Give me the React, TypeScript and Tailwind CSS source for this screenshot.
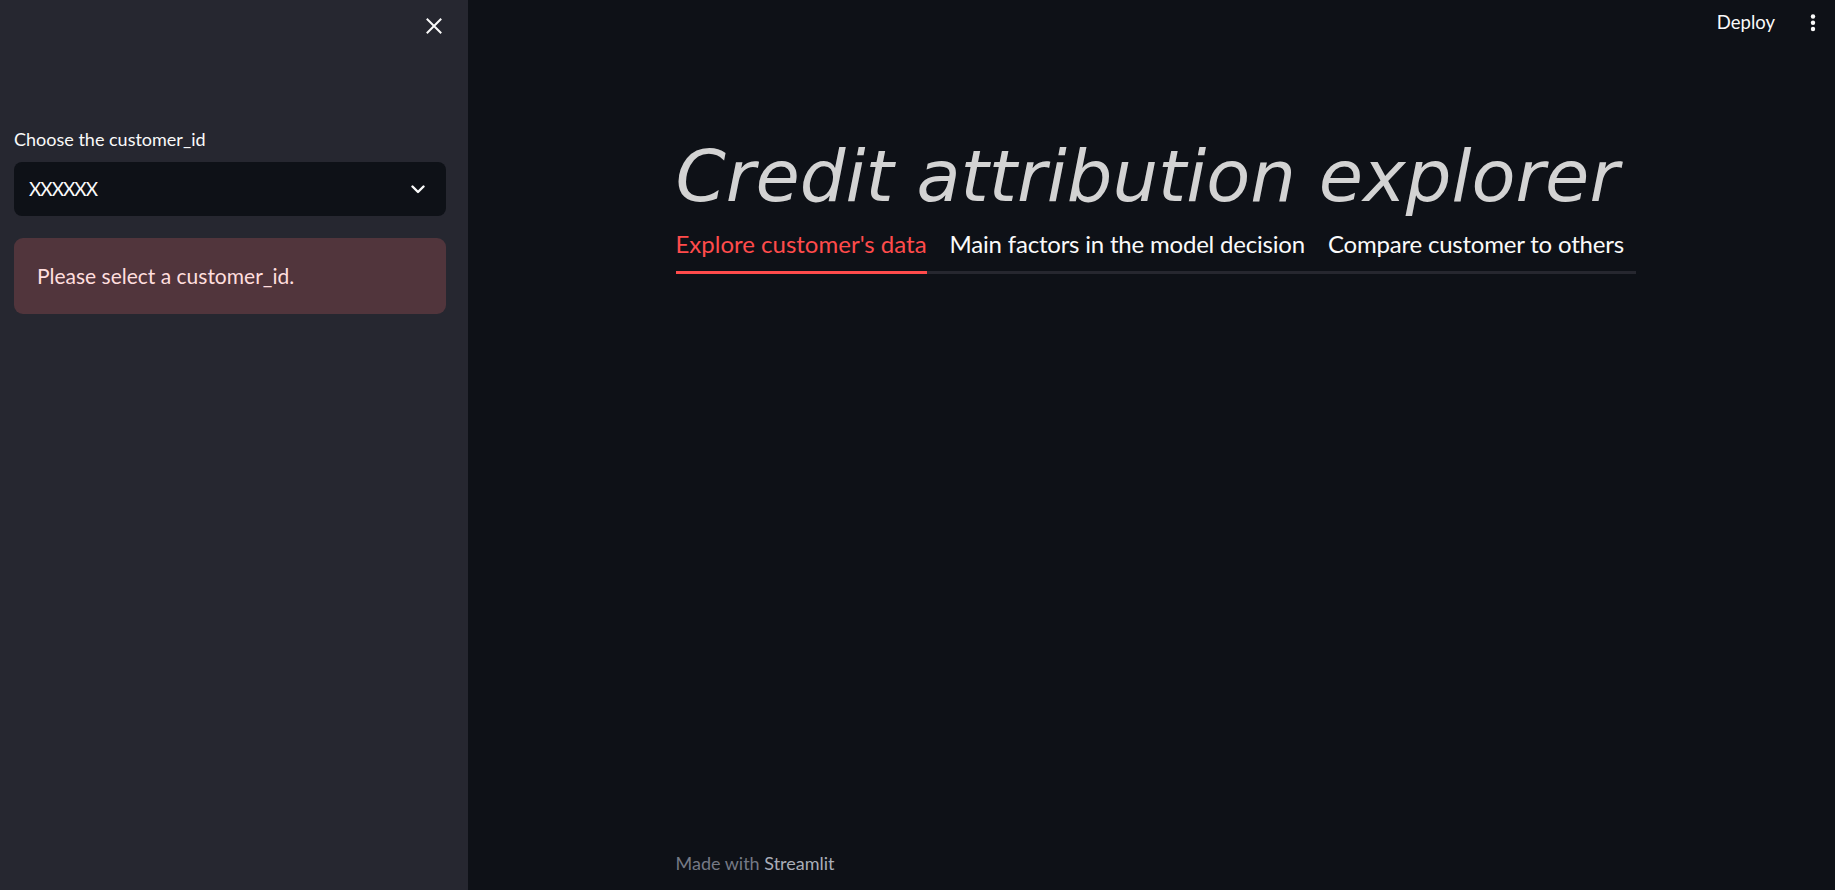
import React from "react";

const sans = "font-['Lato','Noto_Sans',sans-serif]";

function CloseIcon() {
  return (
    <svg width="16" height="16" viewBox="0 0 16 16" fill="none">
      <path d="M1.5 1.5 L14.5 14.5 M14.5 1.5 L1.5 14.5" stroke="#fafafa" strokeWidth="2" strokeLinecap="square" />
    </svg>
  );
}

function Chevron() {
  return (
    <svg width="14" height="9" viewBox="0 0 14 9" fill="none">
      <path d="M1.5 1.5 L7 7 L12.5 1.5" stroke="#fafafa" strokeWidth="2.4" strokeLinecap="round" strokeLinejoin="round" />
    </svg>
  );
}

function Dots() {
  return (
    <svg width="6" height="20" viewBox="0 0 6 20" fill="#fafafa">
      <circle cx="3" cy="3.5" r="2.2" />
      <circle cx="3" cy="9.75" r="2.2" />
      <circle cx="3" cy="16" r="2.2" />
    </svg>
  );
}

const tabs = ["Explore customer's data", "Main factors in the model decision", "Compare customer to others"];

export default function App() {
  return (
    <div className={`flex h-[890px] w-full overflow-hidden bg-[#0e1117] ${sans}`}>
      <aside className="flex w-[468px] shrink-0 flex-col bg-[#262730]">
        <div className="flex h-[52px] items-center justify-end pr-[26px]">
          <CloseIcon />
        </div>
        <div className="px-[14px] pr-[22px]">
          <div className="mt-[75px] text-[18px] leading-[24px] text-[#fafafa]">Choose the customer_id</div>
          <div className="mt-[11px] flex h-[54px] items-center justify-between rounded-[8px] bg-[#0e1117] pl-[15px] pr-[21px]">
            <span className="text-[19px] tracking-[-1px] text-[#fafafa]">XXXXXX</span>
            <Chevron />
          </div>
          <div className="mt-[22px] flex h-[76px] items-center rounded-[9px] bg-[#51353c] pl-[23px]">
            <span className="text-[21px] text-[#ffdede]">Please select a customer_id.</span>
          </div>
        </div>
      </aside>
      <main className="flex flex-1 flex-col">
        <div className="flex h-[46px] items-center justify-end pr-[19px]">
          <span className="text-[18.5px] text-[#fafafa]">Deploy</span>
          <div className="ml-[35px] flex items-center">
            <Dots />
          </div>
        </div>
        <div className="flex flex-1 flex-col pl-[8px]">
          <div className="mx-auto flex w-[960px] flex-1 flex-col">
            <h1 className="mt-[94px] font-['DejaVu_Sans',sans-serif] text-[72px] italic leading-[72px] text-[#d3d3d3]">
              Credit attribution explorer
            </h1>
            <div className="mt-[18px] flex gap-[23px] border-b-[3px] border-[#26272f]">
              {tabs.map((t, i) => (
                <div
                  key={t}
                  className={`-mb-[3px] shrink-0 whitespace-nowrap border-b-[3px] pb-[13px] text-[24px] leading-[28px] ${
                    i === 0
                      ? "border-[#ff4b4b] text-[#ff4b4b]"
                      : "border-transparent tracking-[-0.2px] text-[#fafafa]"
                  }`}
                >
                  {t}
                </div>
              ))}
            </div>
            <div className="flex-1" />
            <div className="pb-[17px] text-[18px] leading-[20px] text-[#757985]">
              Made with <span className="text-[#a9adb8]">Streamlit</span>
            </div>
          </div>
        </div>
      </main>
    </div>
  );
}
